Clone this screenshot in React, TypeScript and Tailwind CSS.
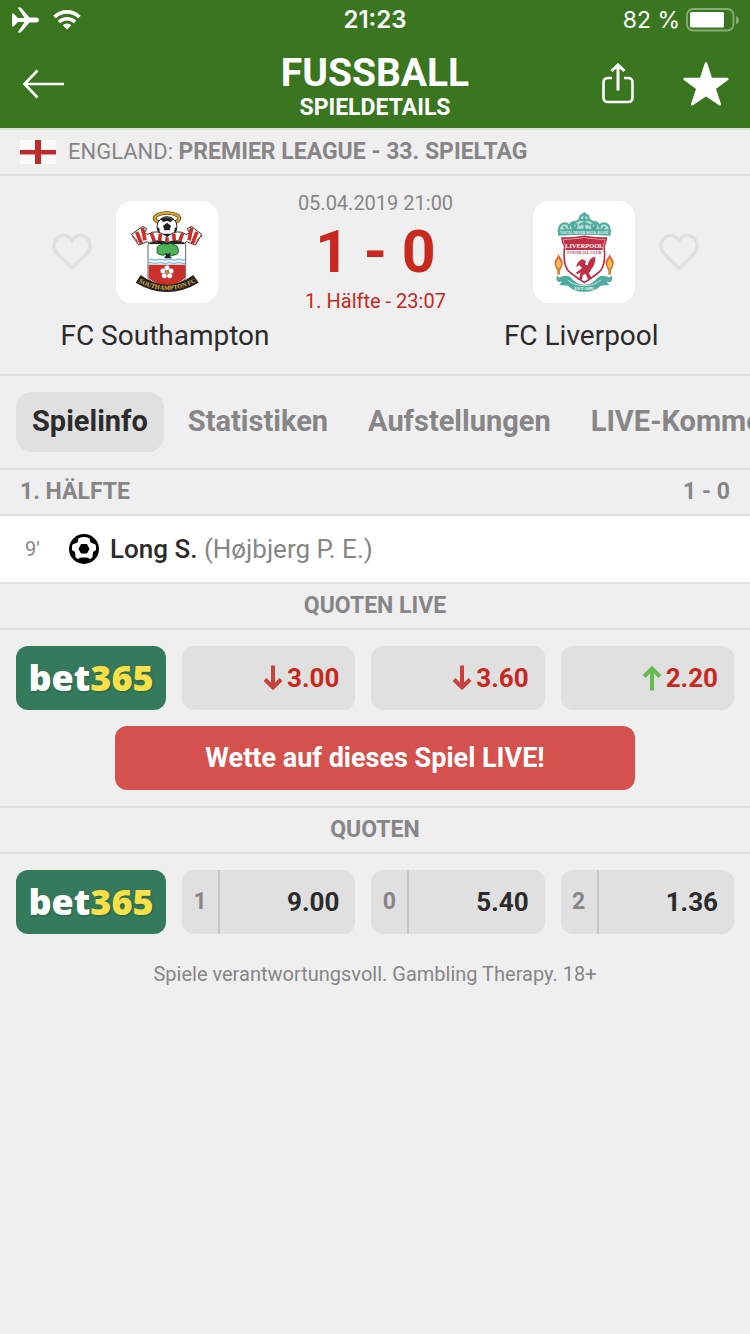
import React from 'react';

const TABS = ['Spielinfo', 'Statistiken', 'Aufstellungen', 'LIVE-Kommentar'];

interface Odd {
  label?: string;
  value: string;
  trend?: 'up' | 'down';
}

const LIVE_ODDS: Odd[] = [
  { value: '3.00', trend: 'down' },
  { value: '3.60', trend: 'down' },
  { value: '2.20', trend: 'up' },
];

const ODDS: Odd[] = [
  { label: '1', value: '9.00' },
  { label: '0', value: '5.40' },
  { label: '2', value: '1.36' },
];

const StatusBar = () => (
  <div className="grid h-10 grid-cols-3 items-center px-3 font-['Inter',sans-serif]">
    <div className="flex items-center gap-[14px]">
      <svg width="27" height="26" viewBox="0 0 27 26" fill="currentColor" aria-label="Flugmodus">
        <path d="M0 6.500h1.500L6 11h6.500L6 1V.5h2.800L17.500 10.500h7q2.500.4 2.500 2.500t-2.500 2.500h-7L8.800 25.500H6V25l6.500-10H6l-4.500 4.500H0z" />
      </svg>
      <svg width="28" height="22" viewBox="0 0 28 22" fill="none" aria-label="WLAN">
        <path d="M1.500 8a18 18 0 0 1 25 0" stroke="currentColor" strokeWidth="3.800" />
        <path d="M6 13a11.500 11.500 0 0 1 16 0" stroke="currentColor" strokeWidth="3.600" />
        <path d="M14 20.500l-4.300-4.300a6.200 6.200 0 0 1 8.600 0z" fill="currentColor" />
      </svg>
    </div>
    <span className="text-center text-[24px] font-semibold">21:23</span>
    <div className="flex items-center justify-end gap-[6px] text-[23px]">
      <span>82 %</span>
      <svg width="54" height="24" viewBox="0 0 54 24" className="-mr-[2px]" aria-label="Akku">
        <rect x="1" y="1" width="46.500" height="21.500" rx="6" fill="none" stroke="#fff" strokeOpacity=".4" strokeWidth="1.800" />
        <rect x="4" y="4" width="34" height="15.500" rx="1.500" fill="#fff" />
        <path d="M50 8q3 1 3 4t-3 4z" fill="#fff" fillOpacity=".4" />
      </svg>
    </div>
  </div>
);

const Header = () => (
  <header className="bg-[#3a7520] text-white">
    <StatusBar />
    <div className="grid h-[88px] grid-cols-3 items-center px-[22px]">
      <button type="button" aria-label="Zurück" className="justify-self-start">
        <svg width="44" height="30" viewBox="2 0 44 30" fill="none" stroke="currentColor" strokeWidth="2.600">
          <path d="M17.500 1.500L4.500 15l13 13.500M5 15h39" />
        </svg>
      </button>
      <div className="flex flex-col items-center pt-1 font-bold whitespace-nowrap">
        <h1 className="text-[39px] leading-[44px]">FUSSBALL</h1>
        <p className="text-[23px] leading-[26px]">SPIELDETAILS</p>
      </div>
      <div className="flex items-center justify-end gap-12">
        <button type="button" aria-label="Teilen">
          <svg width="34" height="42" viewBox="0 0 34 42" fill="none" stroke="currentColor" strokeWidth="2.600">
            <path d="M11 15H7q-4.500 0-4.500 4.500v15q0 4.500 4.500 4.500h20q4.500 0 4.500-4.500v-15q0-4.500-4.500-4.500h-4" />
            <path d="M17 27.500V2M10.500 8L17 2l6.500 6" strokeWidth="3" />
          </svg>
        </button>
        <button type="button" aria-label="Favorit" className="-mr-px">
          <svg width="46" height="46" viewBox="0 0 46 46" fill="currentColor" stroke="currentColor" strokeWidth="2.500" strokeLinejoin="round">
            <path d="M23 2.500l5 15.500h16.300L31.500 27.500l5.300 15.800L23 34 9.200 43.300l5.300-15.800L1.700 18H18z" />
          </svg>
        </button>
      </div>
    </div>
  </header>
);

const Heart = () => (
  <button type="button" aria-label="Team folgen">
    <svg width="40" height="38" viewBox="0 0 40 38" fill="none" stroke="#e0e0e0" strokeWidth="3.400">
      <path d="M20 35.500L5 20.500C0 15 1.500 6.500 7.500 3.500C12.500 1 17.500 3 20 7.500C22.500 3 27.500 1 32.500 3.500C38.500 6.500 40 15 35 20.500Z" />
    </svg>
  </button>
);

const SouthamptonCrest = () => (
  <svg viewBox="18 21 306 306" className="size-[102px] rounded-2xl bg-white" aria-label="FC Southampton">
    <ellipse cx="171" cy="73" rx="37" ry="16" fill="none" stroke="#3a2c14" strokeWidth="11" />
    <ellipse cx="171" cy="73" rx="37" ry="16" fill="none" stroke="#dda52c" strokeWidth="7" />
    <circle cx="171" cy="98" r="30" fill="#fff" stroke="#222" strokeWidth="3" />
    <path d="M171 86l12 9-4 14h-16l-4-14zM151 76q18-12 40 0l-9 8-11-3-11 3zM142 98l6 5 2 17q-9-9-8-22zM200 98l-6 5-2 17q9-9 8-22zM160 119h22l-4 8h-14z" fill="#222" />
    <path d="M65 121L98 97l12 7-7 14 11 3q26-18 57 7 31-25 57-7l11-3-7-14 12-7 31 24-19 32-26-10-6 4q-27-14-53 0-26-14-53 0l-6-4-26 10z" fill="#fff" stroke="#333" strokeWidth="3" strokeLinejoin="round" />
    <g stroke="#c9302c" strokeWidth="11" fill="none">
      <path d="M80 114l14 34M97 101l8 38M124 117l9 25M151 119l-2 22M171 130v14M191 119l2 22M218 117l-9 25M245 101l-8 38M261 114l-14 34" />
      <path d="M67 125l18 20M275 124l-18 22" strokeWidth="5" strokeDasharray="5 3" />
    </g>
    <path d="M114 149h113v104q-16 18-56 29-41-11-57-29z" fill="#fff" stroke="#666" strokeWidth="3" />
    <path d="M116 150q28-17 55-4 27-13 54 4z" fill="#222" />
    <path d="M116 212h109v40q-17 16-54 27-38-11-55-27z" fill="#c9302c" />
    <path d="M116 197q7-3 14 0t14 0 14 0 14 0 14 0 14 0 14 0 11 0M116 207q7-3 14 0t14 0 14 0 14 0 14 0 14 0 14 0 11 0" fill="none" stroke="#75bde8" strokeWidth="4" />
    <path d="M142 168q-4-12 9-15 8-7 20-2 11-5 22 1 12 3 12 15 3 11-8 15-14 6-25-2-14 8-27 0-7-4-3-12z" fill="#4fb05a" stroke="#235e2d" strokeWidth="3" />
    <path d="M165 177l3 7-6 9h24l-7-9 3-8-8 4z" fill="#222" />
    <g fill="#fff" stroke="#844" strokeWidth="1">
      <circle cx="171" cy="222" r="8" />
      <circle cx="183" cy="231" r="8" />
      <circle cx="179" cy="245" r="8" />
      <circle cx="163" cy="245" r="8" />
      <circle cx="159" cy="231" r="8" />
    </g>
    <circle cx="171" cy="235" r="5" fill="#d9a22b" stroke="#333" />
    <path d="M92 243q78 58 158 0l16 23q-95 56-189 0z" fill="#222" />
    <path id="saints-ribbon" d="M84 264q86 48 176-1" fill="none" />
    <text fill="#e5b63c" className="font-['Liberation_Serif',serif] text-[19px] font-bold">
      <textPath href="#saints-ribbon" startOffset="50%" textAnchor="middle">SOUTHAMPTON FC</textPath>
    </text>
  </svg>
);

const Torch = ({ x }: { x: number }) => (
  <g transform={`translate(${x} 0)`}>
    <path d="M0 181q-4 9-9 15-4 7-3 14 2 13 12 17 10-4 12-17 1-7-3-14-5-6-9-15z" fill="#e0623a" />
    <path d="M0 192q-9 12-7 22 2 8 7 10 5-2 7-10 2-10-7-22z" fill="#f4bd45" />
    <path d="M-10 220q10 8 20 0l-6 10v12h-8v-12z" fill="#c98a3a" />
  </g>
);

const LiverpoolCrest = () => (
  <svg viewBox="24 21 306 306" className="size-[102px] rounded-2xl bg-white" aria-label="FC Liverpool">
    <g fill="none" stroke="#4fab9e" strokeWidth="6">
      <path d="M101 110q2-21 18-22 16 1 12 15 2-18 17-19 18-2 18-17l12-9 12 9q0 15 18 17 15 1 17 19-4-14 12-15 16 1 18 22z" fill="#b4ddd6" />
      <path d="M178 57v51M162 78h33M162 94q16-12 33 0M114 99q10 2 8 10M241 99q-10 2-8 10M141 91l13 16M215 91l-13 16" />
      <circle cx="148" cy="96" r="7" />
      <circle cx="207" cy="96" r="7" />
    </g>
    <path d="M99 108q79-8 158 0v17q-79-6-158 0z" fill="#4fab9e" />
    <text x="178" y="120" textAnchor="middle" fill="#fff" className="font-['Liberation_Serif',serif] text-[10px] font-bold">YOU'LL NEVER WALK ALONE</text>
    <path d="M111 132q34 2 67-5 33 7 66 5-2 16-7 25 8 62-18 80-20 15-41 29-21-14-41-29-26-18-18-80-7-9-8-25z" fill="#fff" stroke="#c02f45" strokeWidth="5" />
    <path d="M115 136q32 1 63-5 31 6 62 5-2 13-7 21v11H122v-11q-5-8-7-21z" fill="#c02f45" />
    <text x="178" y="163" textAnchor="middle" fill="#fff" className="font-['Liberation_Serif',serif] text-[19px] font-bold">LIVERPOOL</text>
    <text x="178" y="181" textAnchor="middle" fill="#c02f45" className="font-['Liberation_Serif',serif] text-[12px] font-bold">FOOTBALL CLUB</text>
    <path d="M160 203l12-8 11 7-3 10 8 2q4-24 23-26 0 24-10 35-5 8-9 14l8 17h-12l-6-15-9 5-2 13h-14l7-7 2-15-8 6-6-5 12-8 7-7-9-7-8 6 1-8z" fill="#c02f45" />
    <path d="M99 247q-7 13 8 15M257 247q7 13-8 15" fill="none" stroke="#4fab9e" strokeWidth="6" />
    <path d="M97 253q20-12 38-5 19 24 43 24t43-24q18-7 38 5l-13 11 7 9-26 2q-15 18-49 18t-49-18l-26-2 7-9z" fill="#4fab9e" />
    <path d="M128 258q18 17 50 17t50-17" fill="none" stroke="#fff" strokeWidth="2" />
    <text x="178" y="288" textAnchor="middle" fill="#fff" className="font-['Liberation_Serif',serif] text-[14px] font-bold">EST·1892</text>
    <Torch x={101} />
    <Torch x={254} />
  </svg>
);

const MatchSummary = () => (
  <section className="h-[200px] border-b-2 border-[#e0e0e0] pt-[14px]">
    <div className="flex items-center justify-between pr-[51px] pl-[52px]">
      <div className="flex items-center gap-6">
        <Heart />
        <SouthamptonCrest />
      </div>
      <div className="flex flex-col items-center">
        <time className="text-[20px] leading-[26px] text-[#868686]">05.04.2019 21:00</time>
        <strong className="text-[59px] leading-[72px] font-bold whitespace-pre text-[#c8281e]">1 - 0</strong>
        <span className="text-[20px] leading-[26px] text-[#c8281e]">1. Hälfte - 23:07</span>
      </div>
      <div className="flex items-center gap-6">
        <LiverpoolCrest />
        <Heart />
      </div>
    </div>
    <div className="flex justify-between pt-1 text-center text-[28px] leading-9 text-[#2b2b2b]">
      <h2 className="w-[44%]">FC Southampton</h2>
      <h2 className="w-[45%]">FC Liverpool</h2>
    </div>
  </section>
);

const Tabs = () => (
  <nav className="flex gap-2 overflow-hidden border-b-2 border-[#e0e0e0] p-4 text-[29px] font-bold whitespace-nowrap text-[#868686]">
    {TABS.map((tab, index) => (
      <button
        key={tab}
        type="button"
        className={`h-[60px] shrink-0 rounded-2xl px-4 ${index === 0 ? 'bg-[#e0e0e0] text-[#2b2b2b]' : ''}`}
      >
        {tab}
      </button>
    ))}
  </nav>
);

const SectionTitle = ({ children }: { children: React.ReactNode }) => (
  <h3 className="flex h-[46px] items-center justify-center border-b-2 border-[#e0e0e0] text-[23px] font-bold text-[#868686]">
    {children}
  </h3>
);

const BallIcon = () => (
  <svg width="30" height="30" viewBox="0 0 30 30" aria-label="Tor">
    <circle cx="15" cy="15" r="15" />
    <path
      d="M9.500 4.500q5.500-2.800 11 0l1 4 5 2q1 3 .5 5.500l-3 2-.5 5-2 2-3.500-1.500h-6L8.500 25l-2-2-.5-5-3-2q-.5-2.500.5-5.500l5-2z"
      fill="#fff"
    />
    <path d="M12 10h6l2.500 5-2.500 4.500h-6L9.500 15z" />
  </svg>
);

const TrendArrow = ({ trend }: { trend: 'up' | 'down' }) => (
  <svg
    width="20"
    height="26"
    viewBox="0 0 20 26"
    fill="none"
    strokeWidth="4"
    className={trend === 'up' ? 'stroke-[#65bb4f]' : 'rotate-180 stroke-[#c8413b]'}
  >
    <path d="M10 25.500V4M2 11.500l8-8 8 8" />
  </svg>
);

const BookmakerLink = () => (
  <a
    href="#bet365"
    className="flex w-[150px] shrink-0 items-center justify-center rounded-xl bg-[#357a5d] font-['Open_Sans',sans-serif] text-[36px] leading-none font-extrabold text-white text-shadow-[1px_1px_2px_#246348]"
  >
    bet<span className="text-[#f9e048]">365</span>
  </a>
);

const OddsRow = ({ odds }: { odds: Odd[] }) => (
  <div className="flex h-16 gap-4">
    <BookmakerLink />
    {odds.map((odd) => (
      <button
        key={odd.value}
        type="button"
        className="flex flex-1 items-center overflow-hidden rounded-xl bg-[#e0e0e0] pr-4 text-[26px] font-bold"
      >
        {odd.label && (
          <span className="flex h-full w-[38px] items-center justify-center border-r-2 border-[#c6c6c6] text-[23px] text-[#868686]">
            {odd.label}
          </span>
        )}
        <span className={`flex flex-1 items-center justify-end gap-1 ${odd.trend ? 'text-[#c8281e]' : 'text-[#2b2b2b]'}`}>
          {odd.trend && <TrendArrow trend={odd.trend} />}
          {odd.value}
        </span>
      </button>
    ))}
  </div>
);

const App: React.FC = () => {
  return (
    <div className="min-h-screen bg-[#efefef] font-['Roboto',sans-serif]">
      <Header />
      <main>
        <div className="flex h-12 items-center gap-3 border-y-2 border-[#e0e0e0] px-5 text-[22px] text-[#868686]">
          <svg width="36" height="24" viewBox="0 0 36 24" aria-label="England">
            <path d="M0 0h36v24H0z" fill="#fafafa" />
            <path d="M15 0h6v24h-6zM0 10h36v4H0z" fill="#bf2b2d" />
            <path d="M0 14h15v1H0zM21 14h15v1H21z" fill="#dd9496" />
          </svg>
          <p>
            ENGLAND: <b className="text-[23px]">PREMIER LEAGUE - 33. SPIELTAG</b>
          </p>
        </div>

        <MatchSummary />
        <Tabs />

        <div className="flex h-[46px] items-center justify-between border-b-2 border-[#e0e0e0] px-5 text-[23px] font-bold text-[#868686]">
          <h3>1. HÄLFTE</h3>
          <span>1 - 0</span>
        </div>
        <div className="flex h-[68px] items-center border-b-2 border-[#e0e0e0] bg-white pl-[25px] text-[#868686]">
          <span className="w-11 text-[20px]">9'</span>
          <BallIcon />
          <p className="pl-[11px] text-[26px]">
            <span className="font-medium text-[#2b2b2b]">Long S.</span> (Højbjerg P. E.)
          </p>
        </div>

        <SectionTitle>QUOTEN LIVE</SectionTitle>
        <section className="flex flex-col items-center gap-4 border-b-2 border-[#e0e0e0] p-4">
          <div className="w-full">
            <OddsRow odds={LIVE_ODDS} />
          </div>
          <button type="button" className="h-16 w-[520px] rounded-xl bg-[#d4514d] text-[27px] font-bold text-white">
            Wette auf dieses Spiel LIVE!
          </button>
        </section>

        <SectionTitle>QUOTEN</SectionTitle>
        <section className="p-4">
          <OddsRow odds={ODDS} />
        </section>
        <p className="pt-2 text-center text-[20px] leading-8 text-[#868686]">
          Spiele verantwortungsvoll. Gambling Therapy. 18+
        </p>
      </main>
    </div>
  );
};

export default App;
